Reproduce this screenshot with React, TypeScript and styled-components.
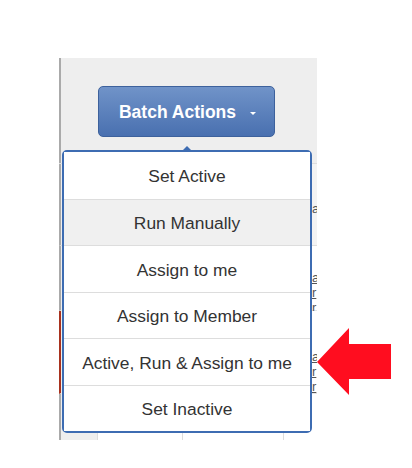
import React from "react";
import styled, { createGlobalStyle } from "styled-components";

const GlobalStyle = createGlobalStyle`
  html, body {
    margin: 0;
    padding: 0;
    background: #fff;
    font-family: "Liberation Sans", Arial, sans-serif;
  }
`;

const actions = [
  "Set Active",
  "Run Manually",
  "Assign to me",
  "Assign to Member",
  "Active, Run & Assign to me",
  "Set Inactive",
];

const rows = [
  { height: 65, pad: 24, marked: false, links: ["a", "r", "r"] },
  { height: 83, pad: 38, marked: true, links: ["a", "r", "r"] },
  { height: 47, pad: 6, marked: false, links: [] as string[] },
];

const Page = () => {
  return (
    <Stage>
      <GlobalStyle />
      <Panel>
        <Toolbar>
          <BatchButton>
            Batch Actions
            <Caret />
          </BatchButton>
        </Toolbar>
        <Table>
          <HeaderRow>
            <Cell $first />
            <Cell />
            <Cell />
            <LinkCell>
              <span>a</span>
            </LinkCell>
          </HeaderRow>
          {rows.map((row, i) => (
            <BodyRow key={i} $height={row.height} $marked={row.marked}>
              <Cell $first />
              <Cell />
              <Cell />
              <LinkCell style={{ paddingTop: row.pad }}>
                {row.links.map((l, j) => (
                  <a key={j}>{l}</a>
                ))}
              </LinkCell>
            </BodyRow>
          ))}
        </Table>
        <Menu>
          {actions.map((label, i) => (
            <MenuItem key={label} $hover={i === 1}>
              {label}
            </MenuItem>
          ))}
        </Menu>
      </Panel>
      <Arrow width="74" height="68" viewBox="0 0 74 68">
        <polygon points="0,34 32,0 32,16 74,16 74,51 32,51 32,67" fill="#ff0d1f" />
      </Arrow>
    </Stage>
  );
};

const Stage = styled.div`
  position: relative;
  width: 412px;
  height: 468px;
  overflow: hidden;
`;

const Panel = styled.div`
  position: relative;
  margin: 58px 0 0 59px;
  width: 258px;
  height: 382px;
  background: #eeeeee;
  overflow: hidden;
`;

const Toolbar = styled.div`
  box-sizing: border-box;
  height: 105px;
  padding: 28px 0 0 37px;
  border-left: 2px solid #aaaaaa;
`;

const BatchButton = styled.button`
  box-sizing: border-box;
  display: flex;
  align-items: center;
  justify-content: center;
  gap: 14px;
  width: 177px;
  height: 51px;
  padding: 1px 0 0 2px;
  border: 1px solid #3d619c;
  border-radius: 5px;
  background: linear-gradient(#7093c8, #4970b0);
  color: #fff;
  font-family: "Liberation Sans", Arial, sans-serif;
  font-weight: bold;
  font-size: 17.5px;
  cursor: pointer;
`;

const Caret = styled.span`
  width: 0;
  height: 0;
  margin-top: 2px;
  border-left: 3px solid transparent;
  border-right: 3px solid transparent;
  border-top: 3px solid #fff;
`;

const Table = styled.div`
  display: flex;
  flex-direction: column;
  border-top: 1px solid #dddddd;
`;

const gridCols = "37px 85px 101px 33px";

const HeaderRow = styled.div`
  display: grid;
  grid-template-columns: ${gridCols};
  height: 81px;
  background: #f3f3f3;
  border-left: 2px solid #aaaaaa;
  border-bottom: 1px solid #dddddd;
  font-size: 13px;
  color: #555;
`;

const BodyRow = styled.div<{ $height: number; $marked: boolean }>`
  box-sizing: border-box;
  display: grid;
  grid-template-columns: ${gridCols};
  height: ${(p) => p.$height}px;
  background: #fff;
  border-left: 2px solid ${(p) => (p.$marked ? "#a8321e" : "#aaaaaa")};
  border-bottom: 1px solid #e6e6e6;
`;

const Cell = styled.div<{ $first?: boolean }>`
  background: ${(p) => (p.$first ? "#eeeeee" : "transparent")};
  border-right: 1px solid #dddddd;
`;

const LinkCell = styled.div`
  display: flex;
  flex-direction: column;
  padding-left: 28px;
  font-size: 13px;
  line-height: 15px;
  color: #555;
  white-space: nowrap;

  span {
    margin-top: 37px;
  }

  a {
    text-decoration: underline;
  }
`;

const Menu = styled.div`
  position: absolute;
  left: 3px;
  top: 92px;
  box-sizing: border-box;
  width: 250px;
  display: flex;
  flex-direction: column;
  background: #fff;
  border: 2px solid #3d6cb2;
  border-radius: 5px;

  &::before {
    content: "";
    position: absolute;
    top: -6px;
    left: 119px;
    border-left: 4px solid transparent;
    border-right: 4px solid transparent;
    border-bottom: 4px solid #3d6cb2;
  }
`;

const MenuItem = styled.div<{ $hover: boolean }>`
  box-sizing: border-box;
  display: flex;
  align-items: center;
  justify-content: center;
  height: 46.5px;
  padding-top: 3px;
  background: ${(p) => (p.$hover ? "#f0f0f0" : "#fff")};
  color: #333;
  font-size: 17.4px;
  white-space: nowrap;

  & + & {
    border-top: 1px solid #dddddd;
  }
`;

const Arrow = styled.svg`
  position: absolute;
  left: 317px;
  top: 328px;
`;

export default Page;
